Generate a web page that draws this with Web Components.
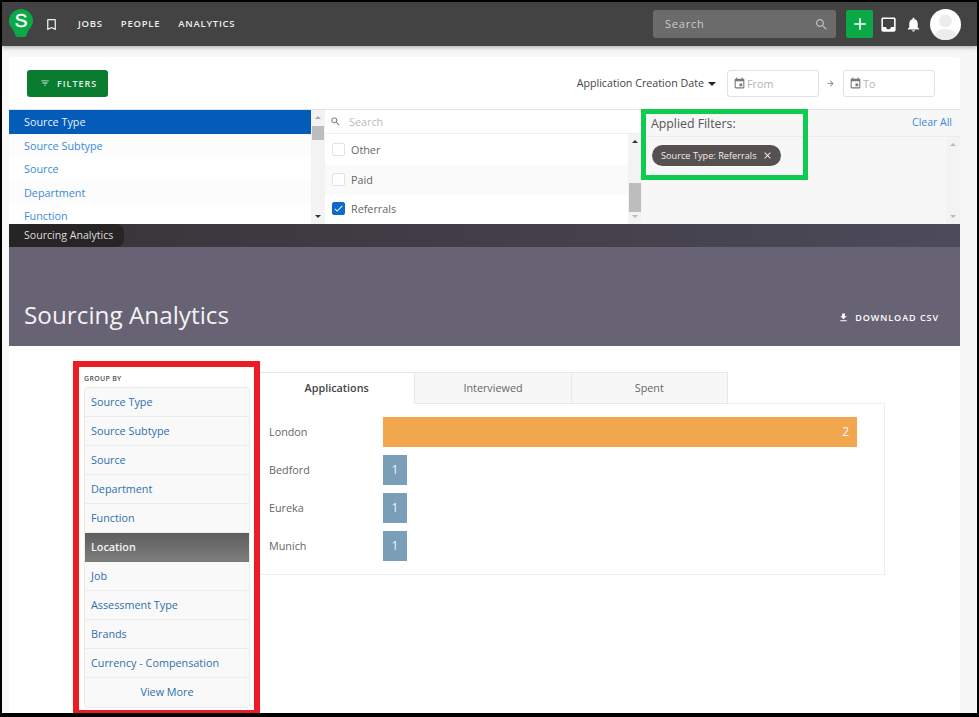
<!DOCTYPE html>
<html lang="en">
<head>
<meta charset="utf-8">
<title>Sourcing Analytics</title>
<style>
  html, body { margin: 0; padding: 0; background: #000; }
  body { font-family: "Open Sans", "Liberation Sans", sans-serif; }
</style>
</head>
<body>
<sr-app>
  <sr-topbar slot="top"></sr-topbar>
  <sr-filter-head slot="card"></sr-filter-head>
  <sr-filter-panels slot="card"></sr-filter-panels>
  <sr-hero slot="card" title="Sourcing Analytics"></sr-hero>
  <sr-analytics slot="card"></sr-analytics>
  <sr-annotation slot="over" color="#0fcb50" style="left:639px;top:107px;width:157px;height:61px;border-width:5px"></sr-annotation>
  <sr-annotation slot="over" color="#ed1c24" style="left:71px;top:359px;width:175px;height:343px;border-width:6px"></sr-annotation>
</sr-app>

<script>
const ICONS = {
  bookmark: 'M17 3H7c-1.1 0-2 .9-2 2v16l7-3 7 3V5c0-1.1-.9-2-2-2zm0 15l-5-2.18L7 18V5h10v13z',
  search: 'M15.5 14h-.79l-.28-.27C15.41 12.59 16 11.11 16 9.5 16 5.91 13.09 3 9.5 3S3 5.91 3 9.5 5.91 16 9.5 16c1.61 0 3.09-.59 4.23-1.57l.27.28v.79l5 4.99L20.49 19l-4.99-5zm-6 0C7.01 14 5 11.99 5 9.5S7.01 5 9.5 5 14 7.01 14 9.5 11.99 14 9.5 14z',
  inbox: 'M19 3H4.99c-1.11 0-1.98.89-1.98 2L3 19c0 1.1.88 2 1.99 2H19c1.1 0 2-.9 2-2V5c0-1.11-.9-2-2-2zm0 12h-4c0 1.66-1.35 3-3 3s-3-1.34-3-3H4.99V5H19v10z',
  bell: 'M12 22c1.1 0 2-.9 2-2h-4c0 1.1.9 2 2 2zm6-6v-5c0-3.07-1.63-5.64-4.5-6.32V4c0-.83-.67-1.5-1.5-1.5s-1.5.67-1.5 1.5v.68C7.64 5.36 6 7.92 6 11v5l-2 2v1h16v-1l-2-2z',
  plus: 'M19 13h-6v6h-2v-6H5v-2h6V5h2v6h6v2z',
  filter: 'M10 18h4v-2h-4v2zM3 6v2h18V6H3zm3 7h12v-2H6v2z',
  event: 'M17 12h-5v5h5v-5zM16 1v2H8V1H6v2H5c-1.11 0-1.99.9-1.99 2L3 19c0 1.1.89 2 2 2h14c1.1 0 2-.9 2-2V5c0-1.1-.9-2-2-2h-1V1h-2zm3 18H5V8h14v11z',
  download: 'M19 9h-4V3H9v6H5l7 7 7-7zM5 18v2h14v-2H5z',
  close: 'M19 6.41L17.59 5 12 10.59 6.41 5 5 6.41 10.59 12 5 17.59 6.41 19 12 13.41 17.59 19 19 17.59 13.41 12z',
  arrow: 'M12 4l-1.41 1.41L16.17 11H4v2h12.17l-5.58 5.59L12 20l8-8z',
  check: 'M9 16.17L4.83 12l-1.42 1.41L9 19 21 7l-1.41-1.41z'
};

class SrIcon extends HTMLElement {
  connectedCallback() {
    const size = this.getAttribute('size') || 16;
    this.attachShadow({ mode: 'open' });
    this.shadowRoot.innerHTML = `
      <style>
        :host { display: inline-flex; flex: none; width: ${size}px; height: ${size}px; }
        svg { width: 100%; height: 100%; fill: currentColor; display: block; }
      </style>
      <svg viewBox="0 0 24 24"><path d="${ICONS[this.getAttribute('name')]}"/></svg>`;
  }
}

class SrApp extends HTMLElement {
  constructor() {
    super();
    this.attachShadow({ mode: 'open' });
    this.shadowRoot.innerHTML = `
      <style>
        :host {
          display: flex; flex-direction: column; position: relative; overflow: hidden;
          box-sizing: border-box; width: 979px; height: 717px;
          border: solid #000; border-width: 2px 2px 4px 2px; background: #f7f7f7;
          color: #555;
        }
        .card {
          flex: 1; display: flex; flex-direction: column; min-height: 0;
          margin: 11px 17px 0 7px; background: #fff; border-radius: 3px 3px 0 0;
        }
      </style>
      <slot name="top"></slot>
      <div class="card"><slot name="card"></slot></div>
      <slot name="over"></slot>`;
  }
}

class SrTopbar extends HTMLElement {
  constructor() {
    super();
    this.attachShadow({ mode: 'open' });
    this.shadowRoot.innerHTML = `
      <style>
        :host {
          display: flex; align-items: center; flex: none; box-sizing: border-box; height: 44px;
          padding: 0 16px 0 7px; background: #434343; color: #fff;
          box-shadow: 0 2px 4px rgba(0,0,0,.25); position: relative; z-index: 1;
        }
        .logo { width: 24px; height: 28px; display: block; margin-bottom: 2px; }
        .logo text { font: 400 19px "Liberation Sans", sans-serif; fill: #fff; stroke: #fff; stroke-width: .45px; }
        .book { margin-left: 11px; color: #f2f2f2; }
        nav { display: flex; gap: 18px; margin-left: 19px; }
        nav span { font-size: 9.5px; font-weight: 600; letter-spacing: .75px; line-height: 12px; color: #eee; }
        .spacer { flex: 1; }
        .search {
          display: flex; align-items: center; justify-content: space-between; box-sizing: border-box;
          width: 183px; height: 28px; padding: 0 7px 0 12px; border-radius: 3px; background: #6b6b6b;
          color: #ccc; font-size: 11px; letter-spacing: .8px;
        }
        .search span { padding-bottom: 1px; }
        .add {
          display: flex; align-items: center; justify-content: center; width: 27px; height: 28px;
          margin-left: 10px; border-radius: 2px; background: #0aa846;
        }
        .inbox { margin-left: 6px; }
        .bell { margin-left: 7px; }
        .avatar {
          width: 31px; height: 31px; margin-left: 8px; border-radius: 50%; background: #fff; overflow: hidden;
        }
        .avatar svg { display: block; width: 100%; height: 100%; fill: #ececec; }
      </style>
      <svg class="logo" viewBox="0 0 24 28">
        <path fill="#0aa846" d="M12 0a12 12 0 0 1 12 12c0 4.500-2.600 7-4.500 9.500-1.300 1.800-1.200 4.500-2.500 5.800-.5.500-1 .7-1.700.7H8.700c-.7 0-1.200-.2-1.700-.7-1.300-1.300-1.200-4-2.500-5.800C2.600 19 0 16.500 0 12A12 12 0 0 1 12 0z"/>
        <text x="12" y="18" text-anchor="middle">S</text>
      </svg>
      <sr-icon class="book" name="bookmark" size="15"></sr-icon>
      <nav><span>JOBS</span><span>PEOPLE</span><span>ANALYTICS</span></nav>
      <div class="spacer"></div>
      <div class="search"><span>Search</span><sr-icon name="search" size="15" style="color:#bbb"></sr-icon></div>
      <div class="add"><sr-icon name="plus" size="20"></sr-icon></div>
      <sr-icon class="inbox" name="inbox" size="19"></sr-icon>
      <sr-icon class="bell" name="bell" size="17"></sr-icon>
      <div class="avatar"><svg viewBox="0 0 31 31"><circle cx="15.500" cy="12" r="6.500"/><path d="M3 31c1-8 6-11 12.500-11S27 23 28 31z"/></svg></div>`;
  }
}

class SrFilterHead extends HTMLElement {
  constructor() {
    super();
    this.attachShadow({ mode: 'open' });
    this.shadowRoot.innerHTML = `
      <style>
        :host {
          display: flex; align-items: center; flex: none; box-sizing: border-box; height: 53px;
          padding: 0 25px 0 18px; border-bottom: 1px solid #dfe3e8;
        }
        button {
          display: flex; align-items: center; gap: 7px; box-sizing: border-box; width: 81px; height: 27px;
          padding: 0 0 0 13px; border: 0; border-radius: 3px; background: #0a7c2f; color: #e8f3ea;
          font: 600 9px "Open Sans", sans-serif; letter-spacing: 1px;
        }
        .spacer { flex: 1; }
        .date { font-size: 10.7px; color: #444; display: flex; align-items: center; gap: 4px; }
        .caret { width: 0; height: 0; border: 4px solid transparent; border-top-color: #222; border-bottom: 0; margin-top: 1px; }
        .input {
          display: flex; align-items: center; gap: 1px; box-sizing: border-box; width: 92px; height: 27px;
          padding-left: 5px; border: 1px solid #e0e0e6; border-radius: 3px;
          color: #b5b5b5; font-size: 10.8px;
        }
        .input sr-icon { color: #777; }
        .from { margin-left: 11px; }
        .to-arrow { color: #777; margin: 0 8px 0 7px; }
      </style>
      <button><sr-icon name="filter" size="10"></sr-icon><span>FILTERS</span></button>
      <div class="spacer"></div>
      <div class="date"><span>Application Creation Date</span><i class="caret"></i></div>
      <div class="input from"><sr-icon name="event" size="13"></sr-icon><span>From</span></div>
      <sr-icon class="to-arrow" name="arrow" size="9"></sr-icon>
      <div class="input"><sr-icon name="event" size="13"></sr-icon><span>To</span></div>`;
  }
}

class SrScrollbar extends HTMLElement {
  connectedCallback() {
    const top = this.getAttribute('thumb-top');
    const height = this.getAttribute('thumb-height') || 0;
    const up = this.getAttribute('up') || '#aaa';
    const down = this.getAttribute('down') || '#333';
    this.attachShadow({ mode: 'open' });
    this.shadowRoot.innerHTML = `
      <style>
        :host {
          display: flex; flex-direction: column; align-items: center; flex: none; box-sizing: border-box;
          width: 14px; background: #f3f3f3; position: relative;
        }
        i { flex: none; width: 0; height: 0; margin: 6px 0; border: 3.5px solid transparent; }
        .up { border-top: 0; border-bottom-color: ${up}; }
        .down { border-bottom: 0; border-top-color: ${down}; }
        .track { flex: 1; align-self: stretch; position: relative; }
        .thumb {
          position: absolute; left: 1px; right: 1px; top: ${top}px; height: ${height}px; background: #bdbdbd;
        }
      </style>
      <i class="up"></i>
      <div class="track">${height ? '<div class="thumb"></div>' : ''}</div>
      <i class="down"></i>`;
  }
}

class SrFilterPanels extends HTMLElement {
  constructor() {
    super();
    this.attachShadow({ mode: 'open' });
    const cats = ['Source Type', 'Source Subtype', 'Source', 'Department', 'Function'];
    const opts = [['Other', false], ['Paid', false], ['Referrals', true]];
    this.shadowRoot.innerHTML = `
      <style>
        :host { display: flex; flex: none; height: 114px; overflow: hidden; font-size: 10.8px; }
        .cats { display: flex; flex: none; width: 316px; }
        .cats ul { flex: 1; margin: 0; padding: 0; list-style: none; overflow: hidden; }
        .cats li {
          box-sizing: border-box; height: 23.500px; line-height: 23.500px; padding-left: 15px; color: #3b8ad8;
        }
        .cats li:nth-child(even) { background: #fcfcfc; }
        .cats li.on { background: #045cb8; color: #e8f0fa; }
        .values { display: flex; flex-direction: column; flex: none; width: 317px; }
        .find {
          display: flex; align-items: center; gap: 8px; flex: none; box-sizing: border-box; height: 24px;
          padding-left: 5px; border-bottom: 1px solid #eee; color: #bbb;
        }
        .find sr-icon { color: #666; }
        .body { flex: 1; display: flex; min-height: 0; }
        .body ul { flex: 1; margin: 0; padding: 1px 0 0; list-style: none; overflow: hidden; }
        .body li {
          display: flex; align-items: center; gap: 6px; box-sizing: border-box; height: 29.500px;
          padding-left: 7px; color: #666;
        }
        .body li:nth-child(even) { background: #fafafa; }
        .box {
          display: flex; align-items: center; justify-content: center; box-sizing: border-box;
          width: 13px; height: 13px; border: 1px solid #e2e2ea; border-radius: 2px; background: #fff; color: #fff;
        }
        .box.on { background: #0b6bcb; border-color: #0b6bcb; }
        .applied { flex: 1; display: flex; flex-direction: column; min-width: 0; background: #f7f7f7; }
        .applied header {
          display: flex; align-items: flex-start; justify-content: space-between; flex: none; box-sizing: border-box;
          height: 27px; padding: 5px 8px 0 9px; border-bottom: 1px solid #ececec;
        }
        .applied h2 { margin: 0; font-size: 12.300px; font-weight: 400; line-height: 17px; color: #555; }
        .applied a { color: #3b8ad8; font-size: 10.5px; line-height: 15px; }
        .applied .body { padding: 0; }
        .chips { flex: 1; padding: 8px 0 0 10px; }
        .chip {
          display: inline-flex; align-items: center; gap: 5px; box-sizing: border-box; height: 21px;
          padding: 0 8px 0 9px; border-radius: 11px; background: #575050; color: #f0eeee; font-size: 9.200px;
        }
      </style>
      <div class="cats">
        <ul>${cats.map((c, i) => `<li class="${i ? '' : 'on'}">${c}</li>`).join('')}</ul>
        <sr-scrollbar thumb-top="1" thumb-height="14"></sr-scrollbar>
      </div>
      <div class="values">
        <div class="find"><sr-icon name="search" size="11"></sr-icon><span>Search</span></div>
        <div class="body">
          <ul>${opts.map(([o, on]) => `<li><span class="box ${on ? 'on' : ''}">${on ? '<sr-icon name="check" size="11"></sr-icon>' : ''}</span>${o}</li>`).join('')}</ul>
          <sr-scrollbar thumb-top="34" thumb-height="29" up="#333" down="#bbb"></sr-scrollbar>
        </div>
      </div>
      <div class="applied">
        <header><h2>Applied Filters:</h2><a>Clear All</a></header>
        <div class="body">
          <div class="chips"><span class="chip">Source Type: Referrals<sr-icon name="close" size="11"></sr-icon></span></div>
          <sr-scrollbar up="#bbb" down="#bbb"></sr-scrollbar>
        </div>
      </div>`;
  }
}

class SrHero extends HTMLElement {
  connectedCallback() {
    const title = this.getAttribute('title');
    this.removeAttribute('title');
    this.attachShadow({ mode: 'open' });
    this.shadowRoot.innerHTML = `
      <style>
        :host { display: flex; flex-direction: column; flex: none; }
        .crumb {
          display: flex; height: 23px; background: linear-gradient(90deg, #363337, #4d4a5a);
        }
        .crumb span {
          padding: 0 11px 0 15px; line-height: 23px; font-size: 10.6px; color: #ddd; background: #262424;
          border-radius: 0 8px 8px 0;
        }
        .main {
          display: flex; align-items: flex-end; justify-content: space-between; box-sizing: border-box;
          height: 99px; padding: 0 21px 14px 15px; background: #676274; color: #fff;
        }
        h1 { margin: 0; font-size: 24.300px; font-weight: 400; line-height: 34px; color: #f3f3f5; }
        .dl {
          display: flex; align-items: center; gap: 6px; margin-bottom: 8px; font-size: 9px; font-weight: 600;
          letter-spacing: .95px;
        }
      </style>
      <div class="crumb"><span>${title}</span></div>
      <div class="main">
        <h1>${title}</h1>
        <div class="dl"><sr-icon name="download" size="11"></sr-icon><span>DOWNLOAD CSV</span></div>
      </div>`;
  }
}

class SrGroupBy extends HTMLElement {
  constructor() {
    super();
    this.attachShadow({ mode: 'open' });
    const items = ['Source Type', 'Source Subtype', 'Source', 'Department', 'Function', 'Location', 'Job',
      'Assessment Type', 'Brands', 'Currency - Compensation'];
    this.shadowRoot.innerHTML = `
      <style>
        :host { display: block; flex: none; width: 166px; padding-top: 2px; }
        .label { height: 13px; line-height: 10px; font-size: 7px; font-weight: 600; letter-spacing: .3px; color: #555; }
        ul {
          margin: 0; padding: 0; list-style: none; border: 1px solid #ebebeb; border-radius: 3px; overflow: hidden;
        }
        li {
          box-sizing: border-box; height: 29px; line-height: 28px; padding-left: 6px; font-size: 10.8px;
          color: #2f6fad; background: #f9f9f9; border-bottom: 1px solid #ececec;
        }
        li:last-child { border-bottom: 0; text-align: center; padding-left: 0; }
        li.on {
          background: linear-gradient(180deg, #5e5e5e, #7d7d7d); color: #f4f4f4; font-weight: 600; border-bottom-color: #777;
        }
      </style>
      <div class="label">GROUP BY</div>
      <ul>${items.map(i => `<li class="${i === 'Location' ? 'on' : ''}">${i}</li>`).join('')}<li>View More</li></ul>`;
  }
}

class SrBarRow extends HTMLElement {
  connectedCallback() {
    const label = this.getAttribute('label');
    const value = this.getAttribute('value');
    const lead = this.hasAttribute('lead');
    this.attachShadow({ mode: 'open' });
    this.shadowRoot.innerHTML = `
      <style>
        :host { display: grid; grid-template-columns: 114px 474px; align-items: center; height: 30.500px; font-size: 10.8px; color: #666; }
        span { padding-bottom: 2px; }
        .bar {
          box-sizing: border-box; height: 30px; width: ${lead ? '100%' : '24px'}; line-height: 29px;
          padding-right: ${lead ? 8 : 0}px; text-align: ${lead ? 'right' : 'center'}; font-size: 12px; color: #f4f7fa;
          background: ${lead ? '#f2a74e' : '#7a9db8'};
        }
      </style>
      <span>${label}</span><div class="bar">${value}</div>`;
  }
}

class SrChart extends HTMLElement {
  constructor() {
    super();
    this.attachShadow({ mode: 'open' });
    this.shadowRoot.innerHTML = `
      <style>
        :host { display: block; flex: none; width: 627px; }
        .tabs { display: flex; width: 470px; height: 32px; margin-bottom: -1px; position: relative; }
        .tabs span {
          flex: 1; box-sizing: border-box; display: flex; align-items: center; justify-content: center;
          padding-bottom: 2px; font-size: 10.8px; color: #666; background: #f7f7f7; border: 1px solid #e8e8e8; border-left: 0;
        }
        .tabs span.on {
          background: #fff; border-bottom-color: #fff; border-left: 1px solid #fff; color: #444; font-weight: 600;
        }
        .plot {
          display: flex; flex-direction: column; gap: 7.500px; box-sizing: border-box; height: 172px;
          padding: 13px 0 0 10px; border: 1px solid #eee;
        }
      </style>
      <div class="tabs"><span class="on">Applications</span><span>Interviewed</span><span>Spent</span></div>
      <div class="plot"><slot></slot></div>`;
  }
}

class SrAnalytics extends HTMLElement {
  constructor() {
    super();
    this.attachShadow({ mode: 'open' });
    this.shadowRoot.innerHTML = `
      <style>
        :host {
          flex: 1; display: flex; align-items: flex-start; gap: 8px; min-height: 0; overflow: hidden;
          padding: 26px 0 0 75px; background: #fff;
        }
      </style>
      <sr-group-by></sr-group-by>
      <sr-chart>
        <sr-bar-row label="London" value="2" lead></sr-bar-row>
        <sr-bar-row label="Bedford" value="1"></sr-bar-row>
        <sr-bar-row label="Eureka" value="1"></sr-bar-row>
        <sr-bar-row label="Munich" value="1"></sr-bar-row>
      </sr-chart>`;
  }
}

class SrAnnotation extends HTMLElement {
  connectedCallback() {
    this.attachShadow({ mode: 'open' });
    this.shadowRoot.innerHTML = `
      <style>
        :host {
          position: absolute; display: block; pointer-events: none;
          border: 5px solid ${this.getAttribute('color')};
        }
      </style>`;
  }
}

customElements.define('sr-icon', SrIcon);
customElements.define('sr-scrollbar', SrScrollbar);
customElements.define('sr-bar-row', SrBarRow);
customElements.define('sr-chart', SrChart);
customElements.define('sr-group-by', SrGroupBy);
customElements.define('sr-analytics', SrAnalytics);
customElements.define('sr-hero', SrHero);
customElements.define('sr-filter-panels', SrFilterPanels);
customElements.define('sr-filter-head', SrFilterHead);
customElements.define('sr-topbar', SrTopbar);
customElements.define('sr-annotation', SrAnnotation);
customElements.define('sr-app', SrApp);
</script>
</body>
</html>
